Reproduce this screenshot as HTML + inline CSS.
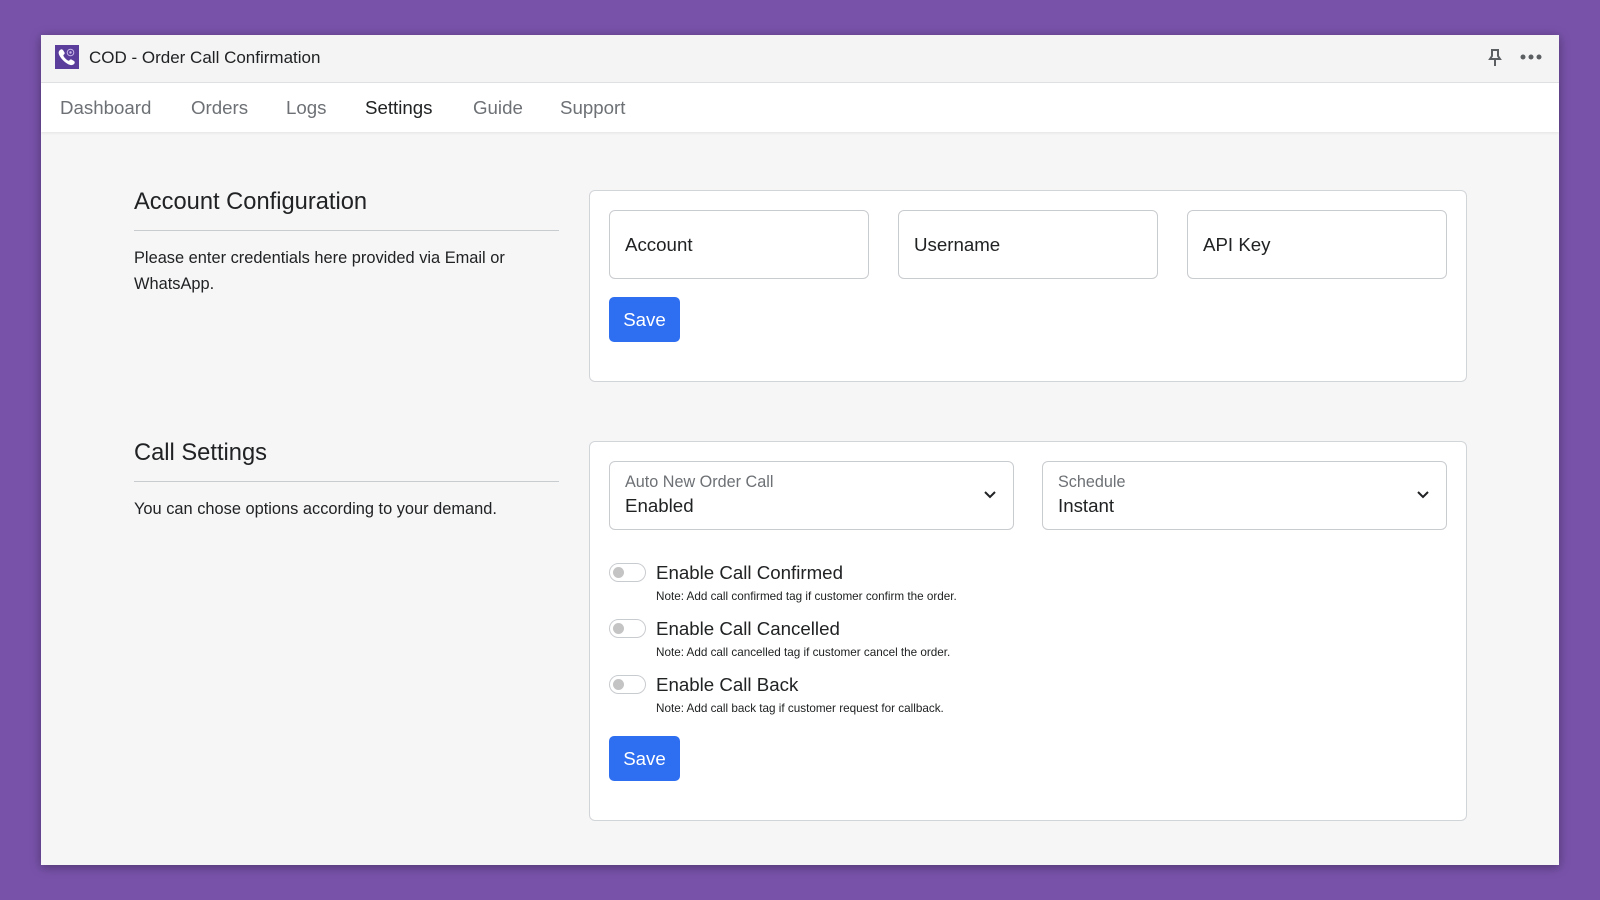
<!DOCTYPE html>
<html><head><meta charset="utf-8"><style>
*{box-sizing:border-box;margin:0;padding:0}
body{width:1600px;height:900px;background:#7852a9;font-family:"Liberation Sans",sans-serif;position:relative;overflow:hidden;color:#202223}
.win{position:absolute;left:41px;top:35px;width:1518px;height:830px;background:#f6f6f7;box-shadow:0 2px 10px rgba(0,0,0,.35)}
.tb{position:absolute;left:0;top:0;width:100%;height:48px;background:#f4f4f5;border-bottom:1px solid #e1e3e5}
.nav{position:absolute;left:0;top:48px;width:100%;height:49px;background:#fff;box-shadow:0 1px 3px rgba(0,0,0,.08)}
.nav span{position:absolute;top:14px;font-size:18.7px;color:#6d7175}
.a{position:absolute}
.h{font-size:23.7px;color:#202223}
.line{position:absolute;height:1px;background:#c9cccf;left:93px;width:425px}
.p{font-size:16.4px;line-height:26px}
.card{position:absolute;left:548px;width:878px;background:#fff;border:1px solid #d2d5d8;border-radius:6px}
.in{position:absolute;border:1px solid #c9cccf;border-radius:6px;background:#fff;font-size:18.7px;padding-left:15px;display:flex;align-items:center}
.btn{position:absolute;width:71px;height:45px;background:#2e6ef0;border-radius:5px;color:#fff;font-size:18.7px;display:flex;align-items:center;justify-content:center}
.tg{position:absolute;width:37px;height:19px;border:1px solid #c9cccf;border-radius:10px;background:#fff}
.tg::after{content:"";position:absolute;left:3px;top:3px;width:11px;height:11px;border-radius:50%;background:#c4c4c4}
.lb{position:absolute;font-size:18.7px}
.nt{position:absolute;font-size:11.7px}
</style></head><body>
<div class="win">
<div class="tb">
<svg class="a" style="left:14px;top:10px" width="24" height="24" viewBox="0 0 24 24"><rect width="24" height="24" fill="#5b3d9c"/><path d="M5 5c1-1 2-1 3 0l1.5 2.5c.5 1 0 1.6-.8 2.2-.5.4-.4 1 0 1.7 1 1.7 2.4 3 4 4 .7.4 1.3.5 1.7 0 .6-.8 1.2-1.3 2.2-.8L19 16c1 1 1 2 0 3-1.5 1.5-4 1.5-7-.5-3-2-5.3-4.3-7-7-1.8-3-1.8-5-0-6.5z" fill="#fff"/><circle cx="15.5" cy="7.5" r="3.3" fill="none" stroke="#c9b8e8" stroke-width="1"/><circle cx="15.5" cy="7.5" r="1.2" fill="#c9b8e8"/></svg>
<div class="a" style="left:48px;top:13px;font-size:17px">COD - Order Call Confirmation</div>
<svg class="a" style="left:1447px;top:13px" width="14" height="20" viewBox="0 0 14 20"><path d="M3 2h8M4 2v6l-2 3h10l-2-3V2M7 11v7" stroke="#5c5f62" stroke-width="2" fill="none"/></svg>
<svg class="a" style="left:1479px;top:19px" width="22" height="6" viewBox="0 0 22 6"><circle cx="3" cy="3" r="2.5" fill="#5c5f62"/><circle cx="11" cy="3" r="2.5" fill="#5c5f62"/><circle cx="19" cy="3" r="2.5" fill="#5c5f62"/></svg>
</div>
<div class="nav">
<span style="left:19px">Dashboard</span><span style="left:150px">Orders</span><span style="left:245px">Logs</span><span style="left:324px;color:#202223">Settings</span><span style="left:432px">Guide</span><span style="left:519px">Support</span>
</div>
<div class="a h" style="left:93px;top:154px">Account Configuration</div>
<div class="line" style="top:195px"></div>
<div class="a p" style="left:93px;top:210px;width:410px">Please enter credentials here provided via Email or WhatsApp.</div>
<div class="card" style="top:155px;height:192px">
<div class="in" style="left:19px;top:19px;width:260px;height:69px">Account</div>
<div class="in" style="left:308px;top:19px;width:260px;height:69px">Username</div>
<div class="in" style="left:597px;top:19px;width:260px;height:69px">API Key</div>
<div class="btn" style="left:19px;top:106px">Save</div>
</div>
<div class="a h" style="left:93px;top:405px">Call Settings</div>
<div class="line" style="top:446px"></div>
<div class="a p" style="left:93px;top:461px">You can chose options according to your demand.</div>
<div class="card" style="top:406px;height:380px">
<div class="in" style="left:19px;top:19px;width:405px;height:69px;display:block;padding-top:11px">
<div style="font-size:16.2px;color:#6d7175">Auto New Order Call</div><div style="font-size:18.7px;margin-top:3px">Enabled</div>
<svg class="a" style="right:16px;top:28px" width="14" height="10" viewBox="0 0 14 10"><path d="M2 2l5 5 5-5" stroke="#202223" stroke-width="2" fill="none"/></svg></div>
<div class="in" style="left:452px;top:19px;width:405px;height:69px;display:block;padding-top:11px">
<div style="font-size:16.2px;color:#6d7175">Schedule</div><div style="font-size:18.7px;margin-top:3px">Instant</div>
<svg class="a" style="right:16px;top:28px" width="14" height="10" viewBox="0 0 14 10"><path d="M2 2l5 5 5-5" stroke="#202223" stroke-width="2" fill="none"/></svg></div>
<div class="tg" style="left:19px;top:121px"></div><div class="lb" style="left:66px;top:120px">Enable Call Confirmed</div><div class="nt" style="left:66px;top:148px">Note: Add call confirmed tag if customer confirm the order.</div>
<div class="tg" style="left:19px;top:177px"></div><div class="lb" style="left:66px;top:176px">Enable Call Cancelled</div><div class="nt" style="left:66px;top:204px">Note: Add call cancelled tag if customer cancel the order.</div>
<div class="tg" style="left:19px;top:233px"></div><div class="lb" style="left:66px;top:232px">Enable Call Back</div><div class="nt" style="left:66px;top:260px">Note: Add call back tag if customer request for callback.</div>
<div class="btn" style="left:19px;top:294px">Save</div>
</div>
</div>
</body></html>
